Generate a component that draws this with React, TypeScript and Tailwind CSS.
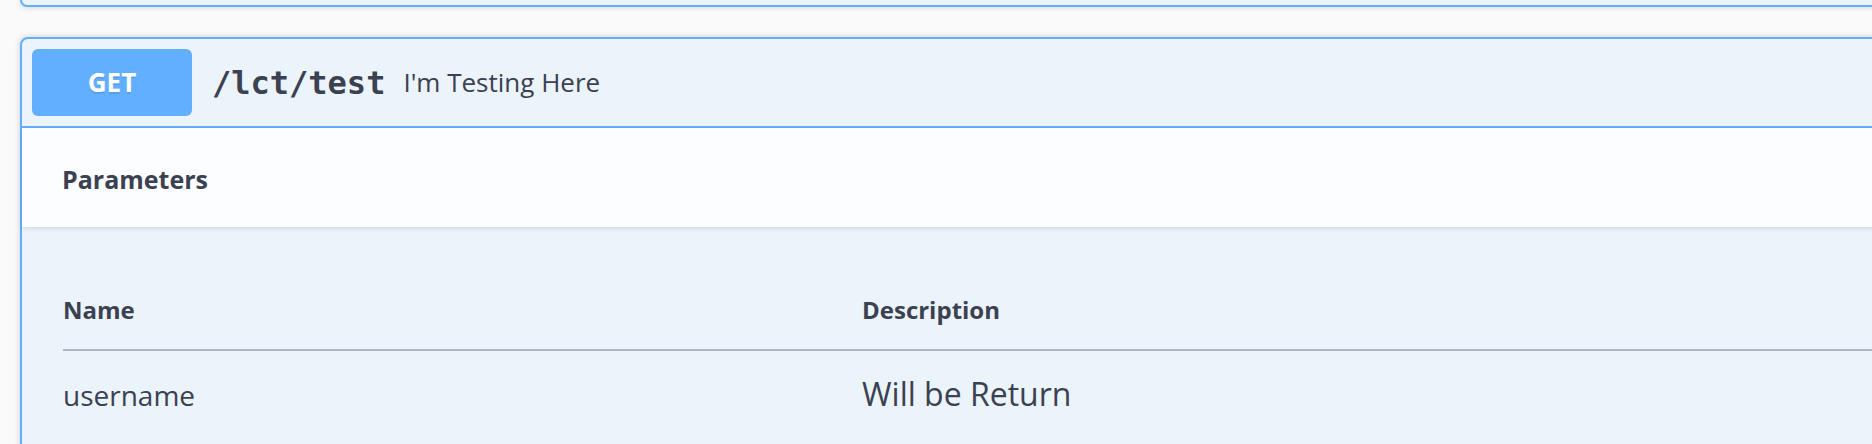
import React from 'react';

const text = 'text-[#3b4151]';

const App = () => {
  return (
    <div className="w-full h-[444px] overflow-hidden bg-[#fafafa] font-['Open_Sans',sans-serif]">
      {/* bottom edge of the previous operation block */}
      <div className="ml-[20px] w-[1900px] h-[7px] bg-[#ebf3fb] border-x-2 border-b-2 border-[#61affe] rounded-b-[8px] shadow-[0_0_6px_rgba(0,0,0,0.19)]"></div>

      {/* GET /lct/test */}
      <div className="mt-[30px] ml-[20px] w-[1900px] bg-[#ebf3fb] border-2 border-[#61affe] rounded-[8px] shadow-[0_0_6px_rgba(0,0,0,0.19)]">
        <div className="flex items-center p-[10px] border-b-2 border-[#61affe]">
          <div className="w-[160px] h-[67px] flex items-center justify-center rounded-[6px] bg-[#61affe] text-white text-[26px] font-bold [text-shadow:0_2px_0_rgba(0,0,0,0.1)]">
            GET
          </div>
          <span className={`ml-[20px] font-['DejaVu_Sans_Mono',monospace] text-[32px] font-bold ${text}`}>
            /lct/test
          </span>
          <span className={`ml-[18px] text-[26px] ${text}`}>I'm Testing Here</span>
        </div>

        <div className="relative z-10 h-[99px] flex items-center pt-[4px] px-[40px] bg-[#fcfdfe] shadow-[0_2px_4px_rgba(0,0,0,0.1)]">
          <h4 className={`text-[25px] font-bold ${text}`}>Parameters</h4>
        </div>

        <div className="pt-[67px] pl-[41px] pb-[40px]">
          <div className="grid grid-cols-[799px_1fr] border-b-2 border-[#b3b6c0] pb-[23px]">
            <div className={`text-[24px] leading-[32px] font-bold ${text}`}>Name</div>
            <div className={`text-[24px] leading-[32px] font-bold ${text}`}>Description</div>
          </div>
          <div className="grid grid-cols-[799px_1fr] items-baseline pt-[21px]">
            <div className={`text-[28px] leading-[44px] ${text}`}>username</div>
            <div className={`text-[32px] leading-[44px] ${text}`}>Will be Return</div>
          </div>
        </div>
      </div>
    </div>
  );
};

export default App;
